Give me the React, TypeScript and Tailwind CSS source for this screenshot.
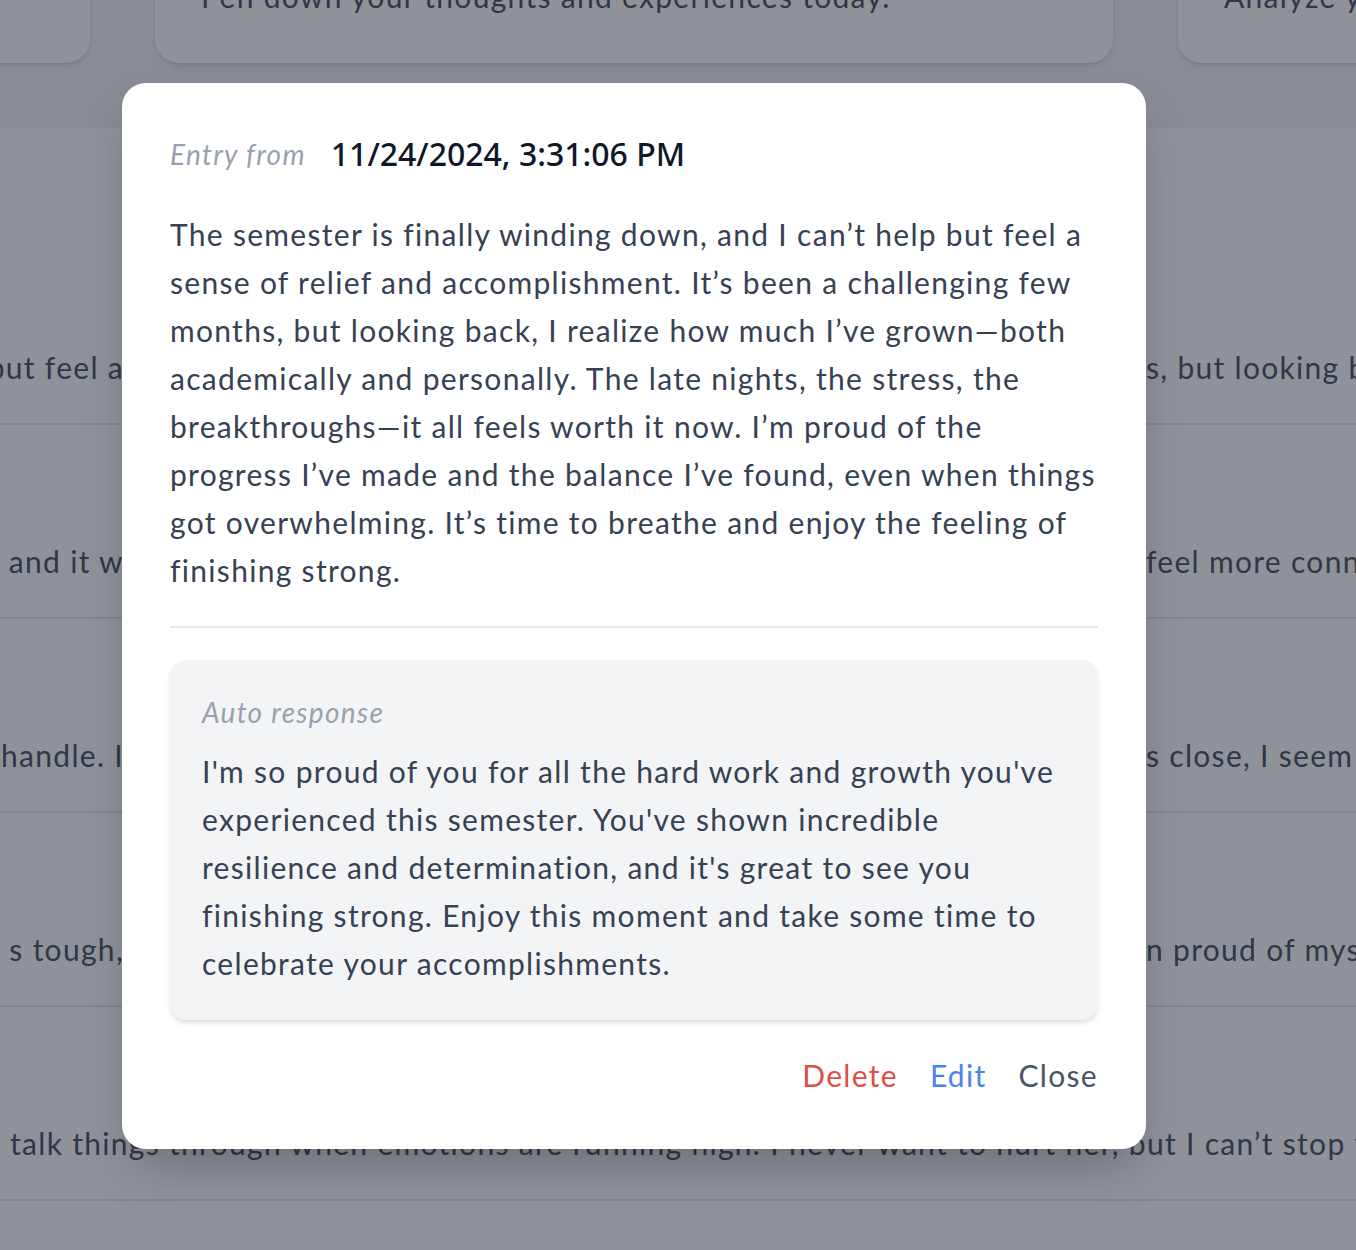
const body = [
  "The semester is finally winding down, and I can’t help but feel a",
  "sense of relief and accomplishment. It’s been a challenging few",
  "months, but looking back, I realize how much I’ve grown—both",
  "academically and personally. The late nights, the stress, the",
  "breakthroughs—it all feels worth it now. I’m proud of the",
  "progress I’ve made and the balance I’ve found, even when things",
  "got overwhelming. It’s time to breathe and enjoy the feeling of",
  "finishing strong.",
];

const reply = [
  "I'm so proud of you for all the hard work and growth you've",
  "experienced this semester. You've shown incredible",
  "resilience and determination, and it's great to see you",
  "finishing strong. Enjoy this moment and take some time to",
  "celebrate your accomplishments.",
];

const rows = [
  ["but feel a", " sense of relief and accomplishment. It’s been a challenging few month", "s, but looking back, I realize how much I’ve grown"],
  [", and it w", "ent so much better than I expected. After we talked I started to ", "feel more connected to her than I have in months"],
  ["handle. I", " keep telling myself it will get easier, but as the deadline get", "s close, I seem to lose track of everything again"],
  ["s tough,", " but I pushed through every single day this week and I think I a", "n proud of myself for not giving up on it"],
];

function Row({ parts }: { parts: string[] }) {
  return (
    <div className="h-[194px] border-b-2 border-gray-200 pt-[112px]">
      <div className="flex text-[30px] leading-[48px] text-gray-600 whitespace-nowrap">
        <div className="w-[122px] shrink-0 overflow-hidden flex justify-end">
          <span className="-mr-[2px]">{parts[0]}</span>
        </div>
        <div className="w-[1024px] shrink-0 overflow-hidden">{parts[1]}</div>
        <div className="flex-1 overflow-hidden">{parts[2]}</div>
      </div>
    </div>
  );
}

export default function App() {
  return (
    <div
      className="relative h-[1250px] overflow-hidden bg-white tracking-[1.3px]"
      style={{ fontFamily: "Lato, 'Noto Sans', sans-serif" }}
    >
      {/* page behind the dialog */}
      <div className="h-[128px] bg-gray-100 overflow-hidden">
        <div className="flex gap-[65px] -ml-[810px] -mt-[80px]">
          <div className="w-[900px] h-[143px] shrink-0 rounded-3xl bg-white shadow-md" />
          <div className="w-[958px] h-[143px] shrink-0 rounded-3xl bg-white shadow-md pt-[52px] pl-[46px] text-[30px] leading-[48px] text-gray-600 whitespace-nowrap">
            Pen down your thoughts and experiences today.
          </div>
          <div className="w-[900px] h-[143px] shrink-0 rounded-3xl bg-white shadow-md pt-[52px] pl-[46px] text-[30px] leading-[48px] text-gray-600 whitespace-nowrap">
            Analyze your entries and discover patterns.
          </div>
        </div>
      </div>
      <div className="pt-[103px]">
        {rows.map((r, i) => (
          <Row key={i} parts={r} />
        ))}
        <div className="h-[194px] border-b-2 border-gray-200 pt-[112px]">
          <div className="pl-[10px] text-[30px] leading-[48px] text-gray-600 whitespace-nowrap">
            talk things through when emotions are running high. I never want to hurt her, but I can’t stop feeling
          </div>
        </div>
      </div>

      {/* overlay */}
      <div className="absolute inset-0 bg-[rgba(17,24,39,0.47)] pt-[83px] pl-[122px]">
        <div className="w-[1024px] rounded-3xl bg-white px-12 pt-12 pb-[51px] shadow-2xl">
          <div className="flex items-center gap-[25px] h-[46px]">
            <span className="italic text-[28px] text-gray-400">Entry from</span>
            <span
              className="text-[32px] font-medium tracking-normal text-gray-900"
              style={{ fontFamily: "'Noto Sans', sans-serif" }}
            >
              11/24/2024, 3:31:06 PM
            </span>
          </div>
          <p className="mt-[33px] text-[30px] leading-[48px] text-gray-700">
            {body.map((l, i) => (
              <span key={i} className="block whitespace-nowrap">{l}</span>
            ))}
          </p>
          <div className="mt-[32px] h-[2px] bg-gray-200" />
          <div className="mt-[32px] rounded-2xl bg-gray-100 px-8 pt-8 pb-[33px] shadow-md">
            <div className="h-[40px] flex items-center italic text-[28px] text-gray-400">Auto response</div>
            <p className="mt-[15px] text-[30px] leading-[48px] text-gray-700">
              {reply.map((l, i) => (
                <span key={i} className="block whitespace-nowrap">{l}</span>
              ))}
            </p>
          </div>
          <div className="mt-[32px] flex justify-end gap-[32px] h-[46px] items-center text-[30px]">
            <button className="text-[#de4f48]">Delete</button>
            <button className="text-[#4b82ec]">Edit</button>
            <button className="text-gray-600">Close</button>
          </div>
        </div>
      </div>
    </div>
  );
}
